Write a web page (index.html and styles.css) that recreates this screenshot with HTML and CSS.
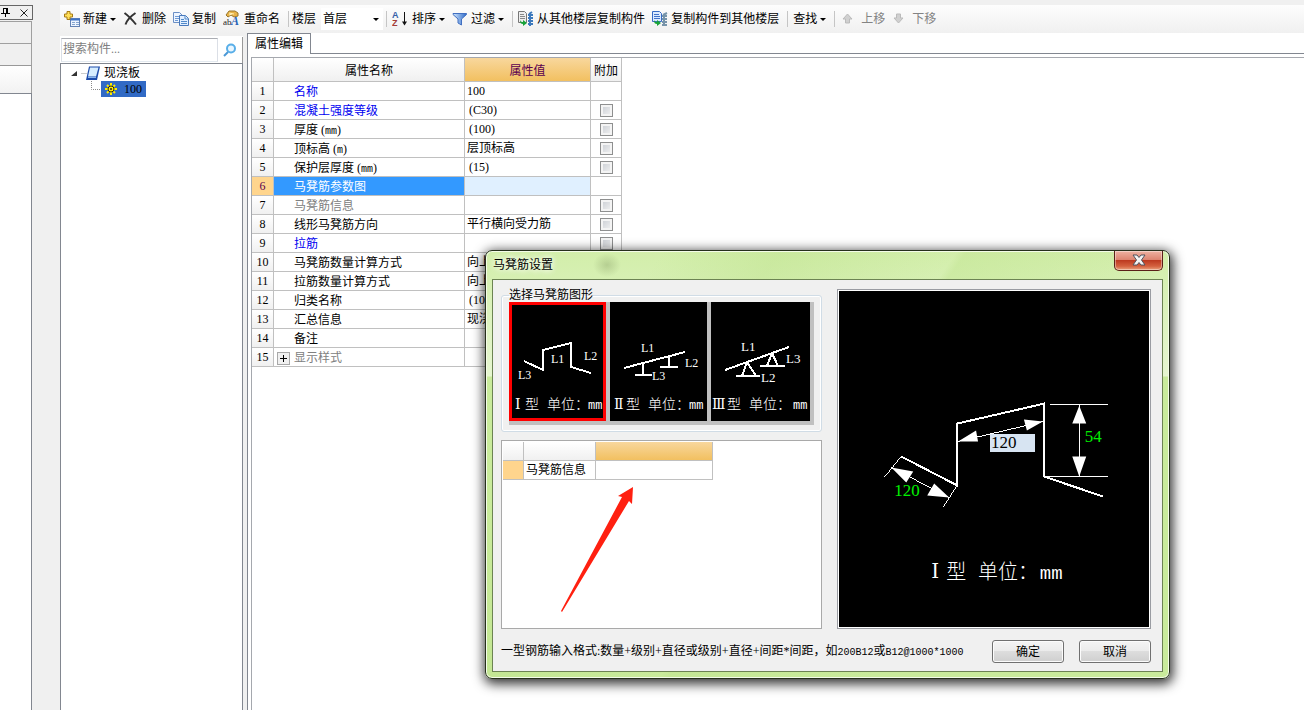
FILE: index.html
```html
<!DOCTYPE html>
<html lang="zh-CN">
<head>
<meta charset="utf-8">
<title>属性编辑</title>
<link rel="stylesheet" href="styles.css">
</head>
<body>
<aside class="dock">
  <div class="dock-caption">
    <button class="dock-btn" aria-label="固定"><svg width="9" height="9" viewBox="0 0 9 9"><path d="M2 .5h5M2.5 0v5M5.5 0v5M6.5 0v5M0 5.5h9M4.500 5v4" stroke="#000" fill="none"/></svg></button>
    <button class="dock-btn" aria-label="关闭"><svg width="8" height="8" viewBox="0 0 8 8"><path d="M.5.5l7 7M7.500.5l-7 7" stroke="#222" fill="none"/></svg></button>
  </div>
  <div class="dock-tab"></div>
  <div class="dock-tab"></div>
  <div class="dock-tab dock-tab-light"></div>
  <div class="dock-body"></div>
</aside>
<main class="workspace">
  <nav class="toolbar">
    <button class="tool"><svg width="16" height="16" viewBox="0 0 16 16"><rect x="6.500" y="7.500" width="9" height="8" fill="#eef5ff" stroke="#6482b4"/><path d="M6 8.500h10" stroke="#3f72c4" stroke-width="2"/><path d="M8 11.500h3M12 11.500h3M8 13.500h3M12 13.500h3" stroke="#86a5cf"/><path d="M3 .5h3v2.500h2.500v3H6v2.500H3V6H.5V3H3z" fill="#ffdf58" stroke="#a67b16"/></svg><span>新建</span><i class="caret"></i></button>
    <button class="tool"><svg width="16" height="16" viewBox="0 0 16 16"><path d="M1.500 2C5 4.500 9 8.500 13 13.500M12.500 2C8 5 4 9 2.500 13.500" fill="none" stroke="#333" stroke-width="2"/></svg><span>删除</span></button>
    <button class="tool"><svg width="16" height="16" viewBox="0 0 16 16"><path d="M.5 1.500h6l3 3v7h-9z" fill="#eef5ff" stroke="#6b8fc5"/><path d="M2 5.500h4M2 7.500h4M2 9.500h3" stroke="#6f9bd5"/><path d="M6.500 4.500h6l3 3v7h-9z" fill="#e2efff" stroke="#4979bb"/><path d="M12 4.500v3.500h3M8 8.500h3M8 10.500h6M8 12.500h6" fill="none" stroke="#528aca"/></svg><span>复制</span></button>
    <button class="tool"><svg width="18" height="18" viewBox="0 0 18 18"><path d="M3 5l3-4h6l3 2v3l-4 1-3-2-3 2z" fill="#e8b348" stroke="#97762e"/><path d="M6 3l5 1M6 5l3-1" stroke="#fff0b5"/><text x="0" y="15" class="glyph-ab">ab</text><text x="8" y="15" class="glyph-a">A</text></svg><span>重命名</span></button>
    <span class="sep wide"></span>
    <label for="floor">楼层</label>
    <span class="floor-box"><select id="floor"><option>首层</option></select><i class="caret"></i></span>
    <span class="sep"></span>
    <button class="tool"><svg width="17" height="18" viewBox="0 0 17 18"><text x="0" y="8" class="glyph-sort blue">A</text><text x="0" y="16" class="glyph-sort red">Z</text><path d="M12.500 2v12" stroke="#111"/><path d="M10 11.500h5l-2.500 4z" fill="#111"/></svg><span>排序</span><i class="caret"></i></button>
    <button class="tool"><svg width="16" height="16" viewBox="0 0 16 16"><defs><linearGradient id="fg"><stop offset="0" stop-color="#d2e8ff"/><stop offset="1" stop-color="#2d69c7"/></linearGradient></defs><path d="M1 2.500h13.500v1L9.500 8v6L6 12V8L1 3.500z" fill="url(#fg)" stroke="#416fc1"/></svg><span>过滤</span><i class="caret"></i></button>
    <span class="sep wide"></span>
    <button class="tool"><svg width="16" height="16" viewBox="0 0 16 16"><path d="M.5.500h6l2 2v9h-8z" fill="#eee" stroke="#777"/><path d="M2 3.500h4M2 5.500h5M2 7.500h5" stroke="#888"/><path d="M2 9c0 3 1 4 3 4v2l4-3-4-3v2c-1 0-2 0-3-2z" fill="#18a339"/><path d="M12 2v13M10 4h5M10 7h5M10 10h5M10 13h5M11 3l3-2" stroke="#3c79bd" stroke-width="2"/></svg><span>从其他楼层复制构件</span></button>
    <button class="tool"><svg width="16" height="16" viewBox="0 0 16 16"><path d="M.5.500h7l2 2v8h-9z" fill="#dceaff" stroke="#386bc4"/><path d="M2 3.500h5M2 5.500h6M2 7.500h6" stroke="#4273c9"/><path d="M2 9c0 3 1 4 3 4v2l4-3-4-3v2c-1 0-2 0-3-2z" fill="#18a339"/><path d="M12 3v12M10 5h5M10 8h5M10 11h5M10 14h5M11 4l4-2" stroke="#7794aa" stroke-width="2"/></svg><span>复制构件到其他楼层</span></button>
    <span class="sep wide"></span>
    <button class="tool"><span>查找</span><i class="caret"></i></button>
    <span class="sep wide"></span>
    <button class="tool" disabled><svg width="18" height="16" viewBox="0 0 18 16"><path d="M7.500 3L12 8H9.500v4h-4V8H3z" fill="#d0d0d0" stroke="#bbb"/></svg><span>上移</span></button>
    <button class="tool" disabled><svg width="17" height="16" viewBox="0 0 17 16"><path d="M6.500 12L11 7H8.500V3h-4v4H2z" fill="#d0d0d0" stroke="#bbb"/></svg><span>下移</span></button>
  </nav>
  <div class="columns">
    <section class="tree-panel">
      <div class="search-row">
        <input class="search" type="text" placeholder="搜索构件..." aria-label="搜索构件">
        <button class="search-btn" aria-label="搜索"><svg width="14" height="14" viewBox="0 0 14 14"><circle cx="8" cy="5.500" r="4" fill="#e9f6ff" stroke="#58aee8" stroke-width="2"/><path d="M5 9l-4 4" stroke="#4a98d6" stroke-width="2"/></svg></button>
      </div>
      <div class="tree">
        <div class="node">
          <svg class="twisty" width="16" height="7" viewBox="0 0 16 7"><path d="M0 6h6V1z" fill="#333"/><path d="M10.500 3.500h6" stroke="#999" stroke-dasharray="1 1"/></svg>
          <svg width="16" height="16" viewBox="0 0 16 16"><path d="M4 1.500h11L12 15H1z" fill="#1d4cab"/><path d="M5 2.500h8.500L11 11.500H3z" fill="#d6edff"/><path d="M3 12.500h8" stroke="#89b6ef"/></svg>
          <span>现浇板</span>
        </div>
        <div class="node child">
          <svg width="10" height="16" viewBox="0 0 10 16"><path d="M.5 0v8.500H10" fill="none" stroke="#888" stroke-dasharray="1 1"/></svg>
          <span class="selected"><svg width="12" height="12" viewBox="0 0 12 12"><path d="M6 0v12M0 6h12M2 2l8 8M10 2l-8 8" stroke="#ffec00" stroke-width="2"/><circle cx="6" cy="6" r="3" fill="#ffec00" stroke="#222"/><circle cx="6" cy="6" r="1" fill="#222"/></svg><span>100</span></span>
        </div>
      </div>
    </section>
    <section class="editor">
      <div class="tabs"><button class="tab">属性编辑</button></div>
      <div class="grid-wrap">
        <table class="grid">
          <colgroup><col class="c-no"><col class="c-name"><col class="c-val"><col class="c-add"></colgroup>
          <thead><tr><th></th><th>属性名称</th><th class="hot">属性值</th><th>附加</th></tr></thead>
          <tbody>
            <tr><th>1</th><td class="name link">名称</td><td>100</td><td></td></tr>
            <tr><th>2</th><td class="name link">混凝土强度等级</td><td class="calc">(C30)</td><td class="add"><input type="checkbox" aria-label="附加 混凝土强度等级"></td></tr>
            <tr><th>3</th><td class="name">厚度 (<span class="unit">mm</span>)</td><td class="calc">(100)</td><td class="add"><input type="checkbox" aria-label="附加 厚度"></td></tr>
            <tr><th>4</th><td class="name">顶标高 (<span class="unit">m</span>)</td><td>层顶标高</td><td class="add"><input type="checkbox" aria-label="附加 顶标高"></td></tr>
            <tr><th>5</th><td class="name">保护层厚度 (<span class="unit">mm</span>)</td><td class="calc">(15)</td><td class="add"><input type="checkbox" aria-label="附加 保护层厚度"></td></tr>
            <tr class="current"><th>6</th><td class="name">马凳筋参数图</td><td></td><td></td></tr>
            <tr><th>7</th><td class="name muted">马凳筋信息</td><td></td><td class="add"><input type="checkbox" aria-label="附加 马凳筋信息"></td></tr>
            <tr><th>8</th><td class="name">线形马凳筋方向</td><td>平行横向受力筋</td><td class="add"><input type="checkbox" aria-label="附加 线形马凳筋方向"></td></tr>
            <tr><th>9</th><td class="name link">拉筋</td><td></td><td class="add"><input type="checkbox" aria-label="附加 拉筋"></td></tr>
            <tr><th>10</th><td class="name">马凳筋数量计算方式</td><td>向上取整+1</td><td></td></tr>
            <tr><th>11</th><td class="name">拉筋数量计算方式</td><td>向上取整+1</td><td></td></tr>
            <tr><th>12</th><td class="name">归类名称</td><td class="calc">(100)</td><td></td></tr>
            <tr><th>13</th><td class="name">汇总信息</td><td>现浇板</td><td></td></tr>
            <tr><th>14</th><td class="name">备注</td><td></td><td></td></tr>
            <tr><th>15</th><td class="name muted expandable"><div class="expand-cell"><button class="expand" aria-label="展开"><svg width="11" height="11" viewBox="0 0 11 11"><path d="M2 5.500h7M5.500 2v7" stroke="#000"/></svg></button><span>显示样式</span></div></td><td></td><td></td></tr>
          </tbody>
        </table>
      </div>
    </section>
  </div>
</main>

<div class="dialog" role="dialog" aria-labelledby="dlg-title">
  <header class="titlebar">
    <h1 id="dlg-title">马凳筋设置</h1>
    <button class="close" aria-label="关闭"><svg width="14" height="12" viewBox="0 0 14 12"><path d="M1 1h4l2 2.500L9 1h4L9.500 6l3.500 5H9L7 8.500 5 11H1l3.500-5z" fill="#f4f4f4" stroke="#51535c"/></svg></button>
  </header>
  <div class="client">
    <div class="panes">
      <div class="left-pane">
        <fieldset class="shapes">
          <legend>选择马凳筋图形</legend>
          <div class="thumbs">
            <button class="thumb chosen" aria-label="Ⅰ型"><svg viewBox="0 0 97 119"><path d="M15 59l19 9V48l28-7v24l20 6" class="bar"/><text x="9" y="77" class="tag">L3</text><text x="42" y="61" class="tag">L1</text><text x="75" y="58" class="tag">L2</text><text x="6" y="107" class="roman">Ⅰ</text><text x="16" y="107" class="cap">型</text><text x="38" y="107" class="cap">单位：</text><text x="79" y="107" class="cap-mm">mm</text></svg></button>
            <button class="thumb" aria-label="Ⅱ型"><svg viewBox="0 0 97 119"><path d="M14 66l61-16M33 61v11M25 73h17M59 54v10M50 65h18" class="bar"/><text x="31" y="50" class="tag">L1</text><text x="75" y="65" class="tag">L2</text><text x="42" y="78" class="tag">L3</text><text x="4" y="107" class="roman">Ⅱ</text><text x="16" y="107" class="cap">型</text><text x="38" y="107" class="cap">单位：</text><text x="79" y="107" class="cap-mm">mm</text></svg></button>
            <button class="thumb" aria-label="Ⅲ型"><svg viewBox="0 0 99 119"><path d="M14 68l64-23M36 60l-5 14M36 60l9 14M25 74h24M61 51l-5 13M61 51l6 13M49 64h25" class="bar"/><text x="30" y="49" class="tag big">L1</text><text x="75" y="61" class="tag big">L3</text><text x="50" y="80" class="tag big">L2</text><text x="1" y="107" class="roman">Ⅲ</text><text x="16" y="107" class="cap">型</text><text x="38" y="107" class="cap">单位：</text><text x="82" y="107" class="cap-mm">mm</text></svg></button>
          </div>
        </fieldset>
        <div class="info">
          <table class="grid info-grid">
            <colgroup><col class="i-no"><col class="i-name"><col class="i-val"></colgroup>
            <thead><tr><th></th><th></th><th class="hot"></th></tr></thead>
            <tbody><tr class="picked"><th></th><td>马凳筋信息</td><td></td></tr></tbody>
          </table>
          <svg class="pointer" width="74" height="126" viewBox="0 0 74 126"><path d="M72 0L57 9l4 1L0 124l1 1L68 14l3 3z" fill="#ff2010"/></svg>
        </div>
      </div>
      <div class="preview">
        <svg class="drawing" viewBox="0 0 310 337">
          <path d="M62 166l56 29v-62l87-20v73l59 20" class="bar"/>
          <path d="M62 165l-18 22M118 195l-14 22M52 177l58 30M119 151l85-20M211 113.500h58M205 186.500h64M240.500 114v72" class="dim"/>
          <path d="M52 177l22 4-7 11zM110 207l-22-2 7-12zM119 151l18-11 2 11zM204 131l-19-2 3 11zM240.500 115l-7 18h14zM240.500 186l-7-20h14z" fill="#fff"/>
          <text x="55" y="206" class="dim-text">120</text>
          <text x="246" y="151" class="dim-text">54</text>
          <text x="92" y="288" class="roman-lg">Ⅰ</text><text x="107" y="289" class="title">型</text><text x="139" y="289" class="title">单位：</text><text x="201" y="289" class="title-mm">mm</text>
        </svg>
        <input class="dim-input" type="text" value="120" aria-label="L1">
      </div>
    </div>
    <footer class="footer">
      <p class="hint">一型钢筋输入格式:数量+级别+直径或级别+直径+间距*间距，如<span class="code">200B12</span>或<span class="code">B12@1000*1000</span></p>
      <button class="push">确定</button>
      <button class="push">取消</button>
    </footer>
  </div>
</div>
</body>
</html>
```
FILE: styles.css
```css
* { box-sizing: border-box; }

body {
  margin: 0;
  height: 100vh;
  display: flex;
  overflow: hidden;
  position: relative;
  background: #f0f0f0;
  color: #000;
  font: 12px/16px "Liberation Serif", "Noto Sans CJK SC", sans-serif;
}

button, input, select { font: inherit; color: inherit; margin: 0; }
button { background: none; border: 0; padding: 0; }
svg { display: block; flex: none; }

/* docked panel at the left edge */
.dock { width: 33px; padding-top: 5px; display: flex; flex-direction: column; flex: none; }
.dock-caption {
  height: 15px; display: flex; align-items: center; gap: 10px; padding-left: 1px;
  border: 1px solid #666; border-left: 0; margin-bottom: 1px;
}
.dock-tab { height: 22px; width: 32px; border: 1px solid #a0a0a0; border-left: 0; border-bottom-width: 0; }
.dock-tab-light { height: 28px; background: linear-gradient(#fff, #f2f2f2); border-top-color: #999; }
.dock-body { flex: 1; width: 32px; background: #fff; border: 1px solid #828790; border-width: 1px 1px 0 0; }

.workspace { flex: 1; margin: 5px 0 0 27px; display: flex; flex-direction: column; min-width: 0; }

/* toolbar */
.toolbar {
  height: 28px; flex: none; display: flex; align-items: center; gap: 3px; padding: 0 2px;
  background: linear-gradient(#fdfdfd, #f0f0f0); white-space: nowrap;
}
.tool { display: flex; align-items: center; gap: 3px; padding: 0 2px; }
.tool:disabled { color: #838383; }
.caret { border: 3px solid transparent; border-top-color: #000; border-bottom: 0; }
.sep { width: 1px; height: 16px; background: #c5c5c5; margin: 0; }
.sep.wide { margin-left: 3px; }
.floor-box { width: 62px; height: 22px; margin-left: 2px; display: flex; align-items: center; background: #fff; padding-right: 4px; }
.floor-box select { flex: 1; min-width: 0; appearance: none; border: 0; background: none; padding: 0 2px; height: 20px; }
.glyph-ab { font: 9px "Liberation Serif", serif; fill: #222; }
.glyph-a { font: italic bold 12px "Liberation Serif", serif; fill: #2563b7; }
.glyph-sort { font: bold 9px "Liberation Sans", sans-serif; }
.blue { fill: #365fa8; }
.red { fill: #a33c37; }

.columns { flex: 1; display: flex; min-height: 0; }

/* component tree */
.tree-panel { width: 183px; flex: none; display: flex; flex-direction: column; margin-top: 3px; border-top: 1px solid #fff; }
.search-row { display: flex; align-items: center; height: 26px; background: #fff; border-right: 1px solid #999; }
.search { width: 157px; height: 24px; margin-left: 1px; border: 1px solid #abadb3; border-color: #abadb3 #dbdfe6 #e3e9ef; padding: 0 1px 2px; background: #fff; }
.search::placeholder { color: #808080; opacity: 1; }
.search-btn { margin-left: 5px; padding: 0; }
.tree { flex: 1; background: #fff; border: 1px solid #828790; border-bottom: 0; padding: 1px 0 0 10px; }
.node { display: flex; align-items: center; height: 16px; gap: 0; }
.node > span { margin-left: 3px; }
.twisty { margin-right: -2px; }
.child { padding-left: 20px; }
.node > .selected { margin-left: 0; padding: 0 4px; display: flex; align-items: center; gap: 7px; background: #316ac5; }
.selected svg { background: #316ac5; }

/* property editor */
.editor { flex: 1; min-width: 0; margin-left: 4px; display: flex; flex-direction: column; background: #fff; border-left: 1px solid #828790; }
.tabs { display: flex; height: 21px; border-bottom: 1px solid #828790; }
.tab { height: 21px; width: 63px; border: 1px solid #828790; border-width: 1px 1px 0 0; background: #fff; padding: 0; margin-bottom: -1px; }
.grid-wrap { flex: 1; margin: 3px 0 0 3px; border: 1px solid #a5a8ae; border-width: 1px 0 0 1px; }

.grid { border-collapse: separate; border-spacing: 0; table-layout: fixed; width: 370px; white-space: nowrap; }
.grid th, .grid td {
  height: 19px; padding: 0 2px; border: 1px solid #c0c0c0; border-width: 0 1px 1px 0;
  font-weight: normal; text-align: left; line-height: 16px; overflow: hidden;
}
.grid th { text-align: center; padding: 0; background: linear-gradient(#fff, #f0f0f0); }
.grid thead th { height: 24px; padding-top: 2px; }
.grid .hot { background: linear-gradient(#f8d79d, #f2c060); color: #5a0050; }
.c-no { width: 22px; }
.c-name { width: 191px; }
.c-val { width: 126px; }
.c-add { width: 31px; }
.grid .name { padding-top: 2px; padding-left: 20px; }
.grid .calc { padding-left: 4px; }
.grid .add { padding: 0 9px; }
.unit { font: 10px "Liberation Mono", monospace; }
.link { color: #0000f0; }
.muted { color: #808080; }
.grid .current th { background: #ffd58d; color: #5a0050; }
.grid .current .name { background: #3399ff; color: #fff; }
.grid .current .name + td { background: #e0f0ff; }
.add input {
  appearance: none; display: block; width: 13px; height: 13px; border: 1px solid #8e8f8f;
  box-shadow: inset 0 0 0 2px #f4f4f4; background: linear-gradient(135deg, #c8ccd2, #f4f4f4);
}
.grid .expandable { padding-left: 3px; }
.expand-cell { display: flex; align-items: center; gap: 4px; }
.expand { border: 1px solid #a8a8a8; background: #f0f0f0; }

/* glass dialog window */
.dialog {
  position: absolute; left: 485px; top: 250px; width: 685px; padding: 0 6px 6px;
  border: 1px solid #26301c; border-radius: 7px;
  background:
    radial-gradient(ellipse 14px 12px at 121px 14px, #5a703c40, transparent),
    linear-gradient(125deg, transparent 18%, #b8de8455 30%, transparent 48%, #bfe38e66 49%, transparent 70%),
    linear-gradient(#d2eeaa, #e6f6d0 125px, #c9eb9b 126px, #c9eb9b);
  box-shadow: inset 0 0 0 1px #f4fce8, 1px 3px 12px 2px #000c;
}
.titlebar { height: 28px; display: flex; justify-content: space-between; align-items: center; }
.titlebar h1 { margin: 0; padding-left: 1px; font-size: 12px; line-height: 16px; font-weight: normal; text-shadow: 0 0 6px #fff, 0 0 6px #fff; }
.close {
  width: 49px; height: 20px; align-self: flex-start; display: flex; justify-content: center; align-items: center;
  border: 1px solid #5a2018; border-top: 0; border-radius: 0 0 5px 5px; padding-bottom: 2px;
  background: linear-gradient(#eeb2a2, #dd8571 45%, #bd3a20 50%, #d4613f 80%, #eaa27d);
  box-shadow: inset 0 0 0 1px #fff6;
}
.client { border: 1px solid #6c8353; background: #f0f0f0; padding: 9px 11px 8px 8px; }
.panes { display: flex; gap: 15px; }
.left-pane { width: 321px; display: flex; flex-direction: column; gap: 8px; }

.shapes { margin: 0; padding: 0 7px 7px; border: 1px solid #d0dce6; border-radius: 3px; box-shadow: inset 0 0 0 1px #fff; min-width: 0; height: 143px; }
.shapes legend { padding: 0; line-height: 13px; }
.thumbs { display: flex; gap: 4px; width: 305px; background: #c0c0c0; padding: 0 4px 4px 0; }
.thumb { width: 97px; height: 119px; background: #000; overflow: hidden; }
.thumb:last-child { width: 99px; }
.thumb.chosen { box-shadow: inset 0 0 0 3px #f00; }
.thumb svg { width: 100%; }
.bar { fill: none; stroke: #fff; stroke-width: 2; shape-rendering: crispEdges; }
.tag { fill: #fff; font: 12px "Liberation Serif", serif; }
.big { font-size: 13px; }
.roman { fill: #fff; font: 14px "DejaVu Serif", serif; }
.cap { fill: #fff; font: 14px "Noto Sans CJK SC", sans-serif; font-weight: 300; }
.cap-mm { fill: #fff; font: 12px "Liberation Mono", monospace; }

.info { position: relative; height: 189px; background: #fff; border: 1px solid #a9a9a9; padding: 1px; }
.info-grid { width: 210px; }
.info-grid thead th { height: 19px; }
.info-grid td { height: 19px; }
.i-no { width: 21px; }
.i-name { width: 72px; }
.i-val { width: 117px; }
.grid .picked th { background: #ffd58d; }
.pointer { position: absolute; left: 59px; top: 46px; }

.preview { position: relative; flex: 1; height: 340px; border: 1px solid #9a9ca2; padding: 1px; background: #fff; }
.drawing { width: 100%; height: 100%; background: #000; }
.dim { stroke: #fff; fill: none; shape-rendering: crispEdges; }
.dim-text { fill: #00f000; font: 17px "Liberation Serif", serif; }
.roman-lg { fill: #fff; font: 20px "DejaVu Serif", serif; }
.title { fill: #fff; font: 20px "Noto Sans CJK SC", sans-serif; font-weight: 300; }
.title-mm { fill: #fff; font: 19px "Liberation Mono", monospace; }
.dim-input { position: absolute; left: 152px; top: 144px; width: 45px; height: 18px; border: 0; padding: 0 1px; background: #d7e4f2; font-size: 17px; line-height: 18px; }

.footer { display: flex; align-items: center; gap: 15px; margin-top: 11px; }
.hint { flex: 1; margin: 0; white-space: nowrap; }
.code { font: 10px/16px "Liberation Mono", monospace; }
.push { width: 72px; height: 23px; border: 1px solid #707070; border-radius: 3px; background: linear-gradient(#f4f4f4, #ebebeb 48%, #dddddd 50%, #cfcfcf); box-shadow: inset 0 0 0 1px #fcfcfc; }
```
